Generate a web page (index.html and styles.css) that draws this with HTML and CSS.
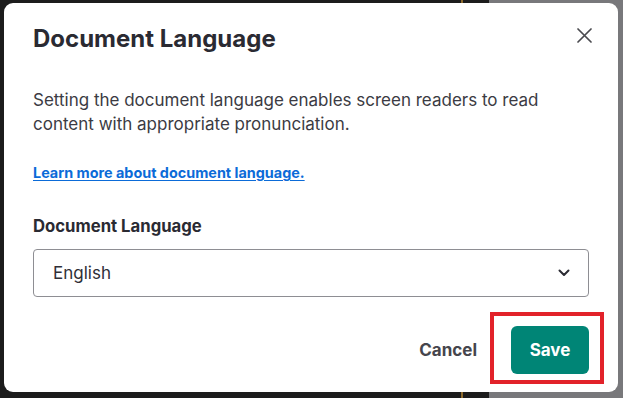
FILE: index.html
```html
<!DOCTYPE html>
<html lang="en">
<head>
  <meta charset="UTF-8">
  <title>Document Language</title>
  <link rel="stylesheet" href="styles.css">
</head>
<body>

<div class="dialog" role="dialog" aria-labelledby="dlg-title">
  <!-- Header -->
  <div class="dialog-head">
    <h2 id="dlg-title">Document Language</h2>
    <button class="close" aria-label="Close">
      <svg width="15" height="15" viewBox="0 0 15 15">
        <path d="M1 1 L14 14 M14 1 L1 14" stroke="#4a4a4f" stroke-width="1.7" fill="none" stroke-linecap="round"/>
      </svg>
    </button>
  </div>

  <p class="intro">Setting the document language enables screen readers to read content with appropriate pronunciation.</p>
  <a class="learn" href="#">Learn more about document language.</a>

  <!-- Language picker -->
  <label class="field-label" for="lang">Document Language</label>
  <div class="select">
    <span>English</span>
    <svg width="12" height="8" viewBox="0 0 12 8">
      <path d="M1.5 1.5 L6 6 L10.5 1.5" stroke="#2b2b33" stroke-width="2" fill="none" stroke-linecap="round" stroke-linejoin="round"/>
    </svg>
  </div>

  <div class="dialog-foot">
    <button class="btn-cancel">Cancel</button>
    <span class="highlight">
      <button class="btn-save">Save</button>
    </span>
  </div>
</div>

</body>
</html>
```

FILE: styles.css
```css
body {
  font-family: Inter, 'Noto Sans', sans-serif;
  margin: 0;
  height: 398px;
  overflow: hidden;
  background: linear-gradient(to right, #1c1c1c 461px, #8d6a2c 461px, #8d6a2c 463px, #1c1c1c 463px, #1c1c1c 489px, #78787b 489px);
}
.dialog {
  box-sizing: border-box;
  width: 614px;
  height: 389px;
  margin: 3px 0 0 4px;
  padding: 20px 29px 0;
  background: white;
  border-radius: 9px;
  display: flex;
  flex-direction: column;
}
.dialog-head {
  display: flex;
  justify-content: space-between;
  align-items: flex-start;
}
.dialog-head h2 {
  margin: 0;
  font-size: 24px;
  line-height: 32px;
  font-weight: 700;
  color: #2a2a32;
}
.close {
  width: 24px;
  height: 24px;
  margin: 0 -7px 0 0;
  padding: 0;
  border: none;
  background: none;
  display: flex;
  align-items: center;
  justify-content: center;
}
.intro {
  margin: 33px 0 0;
  font-size: 17px;
  line-height: 24px;
  color: #3b3b43;
}
.learn {
  align-self: flex-start;
  margin-top: 27px;
  font-size: 14.4px;
  line-height: 20px;
  font-weight: 700;
  color: #0b6bd8;
  text-decoration: underline;
  text-underline-offset: 2px;
}
.field-label {
  margin-top: 31px;
  font-size: 16.7px;
  line-height: 24px;
  font-weight: 700;
  color: #2a2a32;
}
.select {
  box-sizing: border-box;
  height: 48px;
  margin-top: 11px;
  padding: 0 18px 0 19px;
  border: 1px solid #8e8e93;
  border-radius: 4px;
  display: flex;
  align-items: center;
  justify-content: space-between;
  font-size: 17px;
  color: #2f2f37;
}
.dialog-foot {
  margin-top: 29px;
  display: flex;
  justify-content: flex-end;
  align-items: center;
}
.btn-cancel {
  margin-right: 17px;
  padding: 12px 17px;
  border: none;
  background: none;
  font-family: inherit;
  font-size: 17px;
  font-weight: 700;
  color: #45454c;
}
.highlight {
  position: relative;
  display: flex;
}
.highlight::after {
  content: '';
  position: absolute;
  top: -14px;
  right: -15px;
  bottom: -10px;
  left: -21px;
  border: 4px solid #e2222a;
}
.btn-save {
  width: 78px;
  height: 48px;
  border: none;
  border-radius: 6px;
  background: #008576;
  color: white;
  font-family: inherit;
  font-size: 17px;
  font-weight: 700;
}
```
